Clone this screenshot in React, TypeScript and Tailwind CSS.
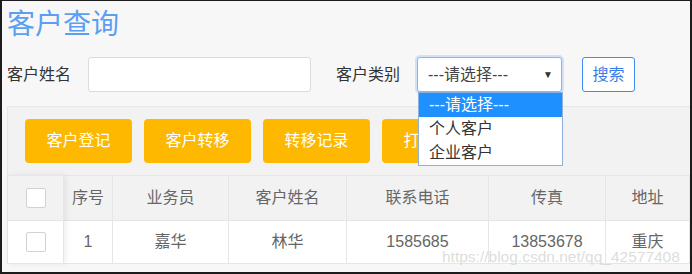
import React from "react"

const font = { fontFamily: '"Liberation Sans", "Noto Sans CJK SC", sans-serif' }

const headers = ["序号", "业务员", "客户姓名", "联系电话", "传真", "地址"]
const widths = ["w-[49px]", "w-[116px]", "w-[118px]", "w-[142px]", "w-[117px]", "w-[84px]"]
const row = ["1", "嘉华", "林华", "1585685", "13853678", "重庆"]

function Box() {
  return <div className="w-[20px] h-[20px] rounded-[2px] border border-[#d2d2d2] bg-white" />
}

export default function App() {
  return (
    <div
      className="relative w-[692px] h-[274px] overflow-hidden bg-[#f7f7f7] border-t border-l-2 border-r-2 border-b-2 border-[#1c1c1c]"
      style={font}
    >
      <h1 className="pl-[5px] mt-[6px] text-[28px] leading-[36px] text-[#5b9ff3]">客户查询</h1>

      <div className="mt-[14px] pl-[5px] flex items-center text-[16px] text-[#333]">
        <span className="w-[64px]">客户姓名</span>
        <input className="ml-[17px] w-[223px] h-[35px] rounded-[3px] border border-[#dcdcdc] bg-white" />
        <span className="ml-[25px] w-[64px]">客户类别</span>
        <div className="relative ml-[17px] w-[145px] h-[35px]">
          <div className="h-full flex items-center justify-between pl-[10px] pr-[8px] rounded-[3px] bg-white border border-[#86b7f2] shadow-[0_0_0_2px_#cfe2fa] text-[#444]">
            <span>---请选择---</span>
            <span className="text-[10px] text-[#333]">▼</span>
          </div>
          <div className="absolute z-20 left-[1px] top-[35px] w-[145px] border border-[#8fb0dc] bg-white text-[16px] leading-[24px]">
            <div className="pl-[10px] bg-[#1e90ff] text-white">---请选择---</div>
            <div className="pl-[10px] text-[#333]">个人客户</div>
            <div className="pl-[10px] text-[#333]">企业客户</div>
          </div>
        </div>
        <button className="ml-[20px] w-[53px] h-[35px] rounded-[3px] border border-[#3d8ef0] bg-white text-[#3a7de8]">
          搜索
        </button>
      </div>

      <div className="mt-[14px] ml-[5px] border-t border-l border-[#e6e6e6]">
        <div className="flex gap-[12px] pl-[17px] pt-[12px] pb-[12px] bg-[#f2f2f2]">
          {["客户登记", "客户转移", "转移记录", "打印客户"].map((t) => (
            <button key={t} className="w-[107px] h-[44px] rounded-[4px] bg-[#ffb800] text-white text-[16px]">
              {t}
            </button>
          ))}
        </div>

        <div className="flex text-[16px] text-[#666]">
          <div className="relative z-10 w-[56px] shrink-0 border-r border-[#e6e6e6] shadow-[2px_0_6px_rgba(0,0,0,0.07)]">
            <div className="h-[46px] flex items-center justify-center bg-[#f2f2f2] border-t border-b border-[#e6e6e6]">
              <Box />
            </div>
            <div className="h-[43px] flex items-center justify-center bg-white border-b border-[#e6e6e6]">
              <Box />
            </div>
          </div>
          <div className="flex-1">
            <div className="flex h-[46px] bg-[#f2f2f2] border-t border-b border-[#e6e6e6]">
              {headers.map((h, i) => (
                <div key={h} className={`${widths[i]} shrink-0 flex items-center justify-center border-r border-[#e6e6e6]`}>
                  {h}
                </div>
              ))}
            </div>
            <div className="flex h-[43px] bg-white border-b border-[#e6e6e6]">
              {row.map((c, i) => (
                <div key={i} className={`${widths[i]} shrink-0 flex items-center justify-center border-r border-[#e6e6e6]`}>
                  {c}
                </div>
              ))}
            </div>
          </div>
        </div>
      </div>

      <div className="absolute z-30 left-[440px] top-[245px] text-[15.5px] leading-[22px] text-[#d4d4d4]/80">
        https://blog.csdn.net/qq_42577408
      </div>
    </div>
  )
}
